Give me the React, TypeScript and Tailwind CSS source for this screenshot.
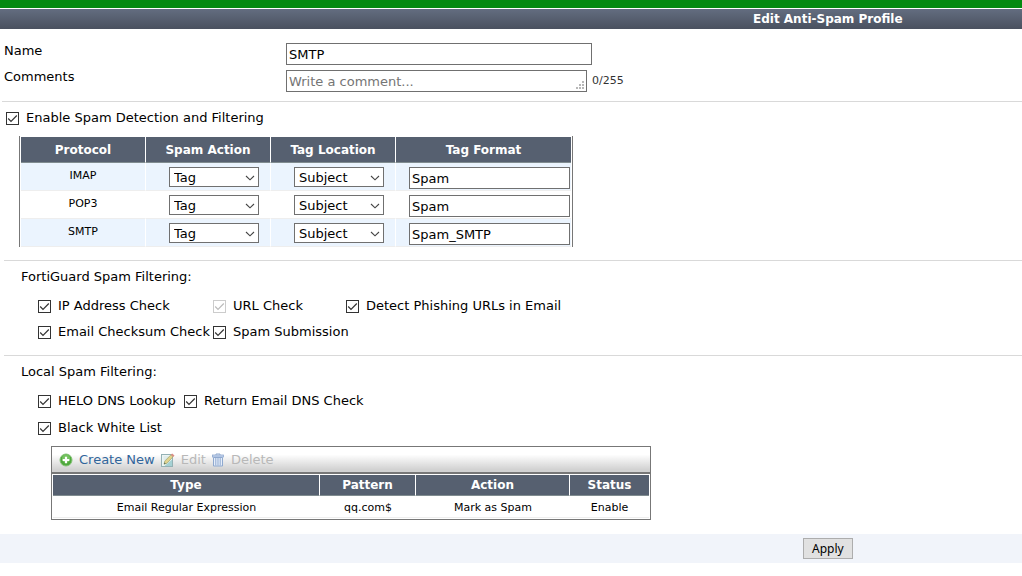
import { useState, type ReactNode } from "react";

const protocols = [
  { name: "IMAP", format: "Spam" },
  { name: "POP3", format: "Spam" },
  { name: "SMTP", format: "Spam_SMTP" },
];

const blackWhiteList = [
  { type: "Email Regular Expression", pattern: "qq.com$", action: "Mark as Spam", status: "Enable" },
];

function Check({ label, disabled = false }: { label: string; disabled?: boolean }) {
  return (
    <label className="flex items-center whitespace-nowrap">
      <span className="relative mr-[7px] h-[13px] w-[13px] shrink-0">
        <input
          type="checkbox"
          defaultChecked
          disabled={disabled}
          className="peer block h-[13px] w-[13px] appearance-none border border-[#333] bg-white disabled:border-[#ccc]"
        />
        <svg
          viewBox="0 0 13 13"
          className="pointer-events-none absolute inset-0 hidden text-[#333] peer-checked:block peer-disabled:text-[#bbb]"
        >
          <path d="M2.2 6.5 L5 9.3 L10.8 3.5" fill="none" stroke="currentColor" strokeWidth="1.2" />
        </svg>
      </span>
      {label}
    </label>
  );
}

function Select({ label, options }: { label: string; options: string[] }) {
  return (
    <span className="relative mx-auto block h-5 w-[90px]">
      <select
        aria-label={label}
        className="block h-5 w-full appearance-none border border-[#707070] bg-white pt-px pl-1 text-[13px] leading-[18px]"
      >
        {options.map((o) => (
          <option key={o}>{o}</option>
        ))}
      </select>
      <svg viewBox="0 0 10 6" className="pointer-events-none absolute top-2 right-1 h-[6px] w-[10px]">
        <path d="M1 1 L5 4.8 L9 1" fill="none" stroke="#444" strokeWidth="1.1" />
      </svg>
    </span>
  );
}

function Th({ children }: { children: ReactNode }) {
  return (
    <th className="border-r border-b border-r-white border-b-[#808c90] bg-[#566070] p-0 text-[12px] font-bold text-white last:border-r-0">
      {children}
    </th>
  );
}

function AddIcon() {
  return (
    <svg viewBox="0 0 14 14" className="h-[14px] w-[14px]">
      <circle cx="7" cy="7" r="6" fill="#4fa83d" stroke="#83c276" />
      <circle cx="7" cy="5.5" r="4" fill="#74c25f" />
      <path d="M7 3.7v6.6M3.7 7h6.6" stroke="#fff" strokeWidth="2.2" />
    </svg>
  );
}

function EditIcon() {
  return (
    <svg viewBox="0 0 14 14" className="h-[14px] w-[14px]">
      <rect x="0.5" y="1.5" width="11" height="12" fill="#edf5f4" stroke="#94b1b4" />
      <path d="M2.5 4h5M2.5 6h4" stroke="#d3e3e1" />
      <path d="M3.5 13h7.5V6.5z" fill="#a5d1d4" />
      <path d="M3 11.2l.8-3.2L10 1.8l2 2-6 6.4z" fill="#e3d48f" stroke="#9ba46d" strokeWidth=".7" />
      <path d="M9.8 1.8l1.4-1.4 2.3 2.1-1.4 1.5z" fill="#dc8f86" />
      <path d="M3 11.2l.5-1.8 1.3 1.2z" fill="#4d6256" />
    </svg>
  );
}

function TrashIcon() {
  return (
    <svg viewBox="0 0 14 14" className="h-[14px] w-[14px]">
      <path d="M5 2V1h4v1" fill="none" stroke="#8fa9cf" />
      <rect x="1.5" y="2" width="11" height="2" fill="#c8d8ee" stroke="#8fa9cf" strokeWidth=".8" />
      <path d="M2.5 4.5h9V13h-9z" fill="#e6eefa" stroke="#8fa9cf" />
      <path d="M4.8 5v7.5M7 5v7.5M9.2 5v7.5" stroke="#8fa9cf" strokeWidth="1" />
    </svg>
  );
}

export default function App() {
  const [comment, setComment] = useState("");

  return (
    <div className="min-h-screen bg-white font-['Verdana','DejaVu_Sans',sans-serif] text-[13px] leading-4 text-black">
      <div className="h-2 bg-[#038a10]" />
      <header className="mt-px h-5 bg-linear-to-b from-[#636d80] to-[#4a515f] pl-[62%] text-center">
        <h1 className="text-[12px] leading-5 font-bold text-white">Edit Anti-Spam Profile</h1>
      </header>

      <form onSubmit={(e) => e.preventDefault()}>
        <section className="ml-[2px] border-b border-[#d9d9d9] pt-[14px] pb-[9px] pl-[2px]">
          <div className="flex items-start">
            <label htmlFor="name" className="w-[282px]">
              Name
            </label>
            <input
              id="name"
              defaultValue="SMTP"
              className="h-[22px] w-[306px] border border-[#707070] px-[2px]"
            />
          </div>
          <div className="mt-[5px] flex items-start">
            <label htmlFor="comments" className="w-[282px] leading-[14px]">
              Comments
            </label>
            <span className="relative h-[22px] w-[301px]">
              <textarea
                id="comments"
                rows={1}
                maxLength={255}
                placeholder="Write a comment..."
                value={comment}
                onChange={(e) => setComment(e.target.value)}
                className="block h-[22px] w-full resize-none overflow-hidden border border-[#707070] px-[2px] pt-px leading-5 placeholder:text-[#757575]"
              />
              <svg viewBox="0 0 8 8" className="pointer-events-none absolute right-[3px] bottom-[3px] h-2 w-2">
                <path
                  d="M6 0h2v2H6zM6 3h2v2H6zM3 3h2v2H3zM6 6h2v2H6zM3 6h2v2H3zM0 6h2v2H0z"
                  fill="#b8b8b8"
                />
              </svg>
            </span>
            <span className="ml-[5px] pt-[3px] text-[11px] text-[#333]">{comment.length}/255</span>
          </div>
        </section>

        <section className="ml-1 border-b border-[#d9d9d9] pt-2 pb-[13px] pl-[2px]">
          <Check label="Enable Spam Detection and Filtering" />
          <div className="mt-[10px] ml-[13px] w-[554px] border-x border-[#777] px-px pt-px">
            <table className="w-full table-fixed border-separate border-spacing-0 text-center">
              <colgroup>
                <col className="w-[125px]" />
                <col className="w-[125px]" />
                <col className="w-[125px]" />
                <col />
              </colgroup>
              <thead>
                <tr className="h-[26px]">
                  <Th>Protocol</Th>
                  <Th>Spam Action</Th>
                  <Th>Tag Location</Th>
                  <Th>Tag Format</Th>
                </tr>
              </thead>
              <tbody>
                {protocols.map((p) => (
                  <tr key={p.name} className="h-7 align-top odd:bg-[#ebf4fe] [&>td]:border-b [&>td]:border-b-[#eee]">
                    <td className="border-r border-r-white p-0 pt-[5px] text-[11px]">{p.name}</td>
                    <td className="border-r border-r-white p-0 pt-1 pl-3">
                      <Select label={`${p.name} spam action`} options={["Tag", "Discard", "Pass"]} />
                    </td>
                    <td className="border-r border-r-white p-0 pt-1 pl-3">
                      <Select label={`${p.name} tag location`} options={["Subject", "MIME"]} />
                    </td>
                    <td className="p-0 pt-1 pr-px pl-[13px]">
                      <input
                        aria-label={`${p.name} tag format`}
                        defaultValue={p.format}
                        className="block h-[22px] w-full border border-[#707070] bg-white px-[2px]"
                      />
                    </td>
                  </tr>
                ))}
              </tbody>
            </table>
          </div>
        </section>

        <section className="ml-1 border-b border-[#d9d9d9] pt-2 pb-[15px] pl-[17px]">
          <h2>FortiGuard Spam Filtering:</h2>
          <div className="mt-[13px] ml-[17px] grid grid-cols-[175px_133px_auto] justify-start gap-y-[10px]">
            <Check label="IP Address Check" />
            <Check label="URL Check" disabled />
            <Check label="Detect Phishing URLs in Email" />
            <Check label="Email Checksum Check" />
            <Check label="Spam Submission" />
          </div>
        </section>

        <section className="ml-1 pt-2 pb-[14px] pl-[17px]">
          <h2>Local Spam Filtering:</h2>
          <div className="mt-[13px] ml-[17px] grid grid-cols-[146px_auto] justify-start gap-y-[11px]">
            <Check label="HELO DNS Lookup" />
            <Check label="Return Email DNS Check" />
            <Check label="Black White List" />
          </div>

          <div className="mt-[10px] ml-[30px] w-[600px] border border-[#777]">
            <div className="flex h-[27px] items-center border-b-2 border-[#777] bg-linear-to-b from-white from-30% to-[#d2d2d2] to-90% pl-[7px]">
              <button type="button" className="flex items-center gap-[6px] text-[#30659b]">
                <AddIcon />
                Create New
              </button>
              <button type="button" disabled className="ml-[6px] flex items-center gap-[6px] text-[#b8b8b8]">
                <EditIcon />
                Edit
              </button>
              <button type="button" disabled className="ml-[5px] flex items-center gap-[6px] text-[#b8b8b8]">
                <TrashIcon />
                Delete
              </button>
            </div>
            <div className="p-px">
              <table className="w-full table-fixed border-separate border-spacing-0 text-center">
                <colgroup>
                  <col />
                  <col className="w-[96px]" />
                  <col className="w-[154px]" />
                  <col className="w-[79px]" />
                </colgroup>
                <thead>
                  <tr className="h-[21px]">
                    <Th>Type</Th>
                    <Th>Pattern</Th>
                    <Th>Action</Th>
                    <Th>Status</Th>
                  </tr>
                </thead>
                <tbody>
                  {blackWhiteList.map((row) => (
                    <tr
                      key={row.pattern}
                      className="h-[22px] text-[11px] [&>td]:border-b [&>td]:border-[#eee] [&>td]:p-0 [&>td]:pt-[3px]"
                    >
                      <td>{row.type}</td>
                      <td>{row.pattern}</td>
                      <td>{row.action}</td>
                      <td>{row.status}</td>
                    </tr>
                  ))}
                </tbody>
              </table>
            </div>
          </div>
        </section>

        <footer className="flex h-[29px] items-center justify-center bg-[#f1f4fa] pl-[62%]">
          <button
            type="submit"
            className="h-[21px] border border-[#adadad] bg-[#e1e1e1] px-2 font-['Noto_Sans',sans-serif] text-[12px] leading-[19px]"
          >
            Apply
          </button>
        </footer>
      </form>
    </div>
  );
}
